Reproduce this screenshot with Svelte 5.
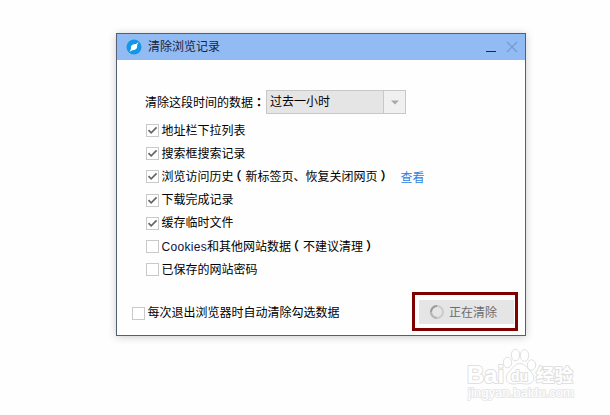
<script lang="ts">
    let items = [
        { label: "地址栏下拉列表", checked: true },
        { label: "搜索框搜索记录", checked: true },
        { label: "浏览访问历史", note: "新标签页、恢复关闭网页", link: "查看", checked: true },
        { label: "下载完成记录", checked: true },
        { label: "缓存临时文件", checked: true },
        { prefix: "Cookies", label: "和其他网站数据", note: "不建议清理", checked: false },
        { label: "已保存的网站密码", checked: false },
    ];
    let autoClear = false;
</script>

{#snippet box(checked: boolean)}
    <span class="box">
        {#if checked}
            <svg width="11" height="11" viewBox="0 0 11 11">
                <path d="M1.5 5.2L4.2 7.8L9.6 2.4" fill="none" stroke="#666" stroke-width="1.7" />
            </svg>
        {/if}
    </span>
{/snippet}

<div class="page">
    <div class="dialog">
        <div class="titlebar">
            <svg class="logo" width="16" height="16" viewBox="0 0 16 16">
                <circle cx="8" cy="8" r="7.5" fill="#1296e6" />
                <path d="M12.8 3.2L11.2 5.6L11 9Q9 11.4 6.4 11.2L3.4 12.8L4.9 10.2L5 7Q7 4.7 9.8 4.9Z" fill="#fff" />
            </svg>
            <span class="title">清除浏览记录</span>
            <svg class="controls" width="32" height="12" viewBox="0 0 32 12">
                <path d="M0 10.5H10" stroke="#20293b" stroke-width="1" />
                <path d="M21 1L31 11M31 1L21 11" stroke="#7099cf" stroke-width="1.1" />
            </svg>
        </div>

        <div class="body">
            <div class="range">
                <span class="caption">清除这段时间的数据<span class="colon">：</span></span>
                <div class="select">
                    <span class="value">过去一小时</span>
                    <span class="arrow">
                        <svg width="8" height="5" viewBox="0 0 8 5"><path d="M0 .5H8L4 4.5Z" fill="#aaa" /></svg>
                    </span>
                </div>
            </div>
            <div class="list">
                {#each items as item}
                    <div class="row">
                        {@render box(item.checked)}
                        <span class="label">
                            {#if item.prefix}<span class="latin">{item.prefix}</span>{/if}{item.label}{#if item.note}<span class="paren open">（</span>{item.note}<span class="paren">）</span>{/if}
                        </span>
                        {#if item.link}<span class="link">{item.link}</span>{/if}
                    </div>
                {/each}
            </div>
        </div>

        <div class="footer">
            <div class="auto">
                {@render box(autoClear)}
                <span class="label">每次退出浏览器时自动清除勾选数据</span>
            </div>
            <div class="highlight">
                <div class="button">
                    <svg width="16" height="16" viewBox="0 0 16 16" fill="none" stroke-width="2">
                        <circle cx="8" cy="8" r="6" stroke="#cbcbcb" />
                        <path d="M8 14A6 6 0 0 1 2 8" stroke="#b5b5b5" />
                        <path d="M2 8A6 6 0 0 1 8 2" stroke="#9b9b9b" />
                    </svg>
                    <span>正在清除</span>
                </div>
            </div>
        </div>
    </div>

    <svg class="watermark" width="120" height="60" viewBox="0 0 120 60">
        <g fill="#fff" stroke="#e0e0e0" stroke-width="1">
            <ellipse cx="40.5" cy="16.5" rx="4.2" ry="5.3" />
            <ellipse cx="48.5" cy="9" rx="4.2" ry="5.8" />
            <ellipse cx="57.5" cy="9.5" rx="4.2" ry="5.8" />
            <ellipse cx="64.5" cy="19" rx="4.2" ry="5.2" />
            <path d="M53 17.5C58 17.5 60 22 64 26C69 31 67 37.5 61 38C57 38 56 37.5 53 37.5C50 37.5 49 38 45 38C39 37.5 37 31 42 26C46 22 48 17.5 53 17.5Z" />
        </g>
        <g class="mark">
            <text class="bai" x="0" y="37" textLength="37" lengthAdjust="spacingAndGlyphs">Bai</text>
            <text class="du" x="44" y="35" textLength="17" lengthAdjust="spacingAndGlyphs">du</text>
            <text class="exp" x="69" y="36">经验</text>
            <text class="url" x="1" y="51" textLength="106" lengthAdjust="spacingAndGlyphs">jingyan.baidu.com</text>
        </g>
    </svg>
</div>

<style>
    :global(body) {
        overflow: hidden;
        background: #fefefe;
    }

    .page {
        position: relative;
        box-sizing: border-box;
        width: 610px;
        height: 415px;
        padding: 33px 0 0 116px;
        font: 12px/16px "Liberation Sans", "Noto Sans CJK SC", sans-serif;
        color: #000;
    }

    .dialog {
        display: flex;
        flex-direction: column;
        box-sizing: border-box;
        width: 410px;
        height: 303px;
        border: 1px solid #535f75;
        background: #fefefe;
        box-shadow: 0 1px 8px rgba(0, 0, 0, 0.2);
        white-space: nowrap;
    }

    .titlebar {
        display: flex;
        align-items: center;
        box-sizing: border-box;
        height: 26px;
        padding: 0 7px 0 9px;
        background: #92bbf3;
    }

    .title {
        margin-left: 6px;
        color: #17233a;
    }

    .controls {
        margin-left: auto;
    }

    .body {
        flex: 1;
        padding: 30px 0 0 28px;
    }

    .range {
        display: flex;
        align-items: center;
    }

    .caption {
        width: 121px;
    }

    .colon {
        font-family: "Noto Sans CJK TC", sans-serif;
        font-weight: bold;
    }

    .select {
        display: flex;
        box-sizing: border-box;
        width: 140px;
        height: 24px;
        border: 1px solid #c8c8c8;
        background: #e5e5e5;
        line-height: 22px;
    }

    .value {
        flex: 1;
        padding-left: 3px;
    }

    .arrow {
        display: flex;
        align-items: center;
        justify-content: center;
        width: 21px;
        border-left: 1px solid #c8c8c8;
        background: #f0f0f0;
    }

    .list {
        padding: 5px 0 0 1px;
    }

    .row {
        display: flex;
        align-items: center;
        height: 23.2px;
    }

    .box {
        display: flex;
        box-sizing: border-box;
        width: 13px;
        height: 13px;
        margin-right: 2.5px;
        border: 1px solid #c9c9c9;
        background: #fff;
    }

    .latin {
        color: #101040;
        letter-spacing: 0.3px;
    }

    /* half-width brackets centred in a full-width cell */
    .paren {
        display: inline-block;
        width: 6px;
        margin: 0 3px;
        font-family: "Noto Sans CJK SC", sans-serif;
        font-weight: bold;
        font-feature-settings: "halt";
        line-height: 16px;
    }

    .open {
        margin: 0 4px 0 2px;
    }

    .link {
        margin-left: 11px;
        padding-top: 3px;
        color: #2f7fe0;
    }

    .footer {
        display: flex;
        align-items: center;
        justify-content: space-between;
        padding: 0 7px 4px 15px;
    }

    .auto {
        display: flex;
        align-items: center;
        padding-top: 3px;
    }

    .highlight {
        box-sizing: border-box;
        width: 106px;
        height: 39px;
        padding: 5px 1px 4px 4px;
        border: 3px solid #800000;
    }

    .button {
        display: flex;
        align-items: center;
        box-sizing: border-box;
        height: 24px;
        padding-left: 10px;
        background: #e5e5e5;
        color: #6c6c6c;
    }

    .button span {
        margin-left: 4px;
        padding-top: 2px;
    }

    .watermark {
        position: absolute;
        left: 467px;
        top: 346px;
    }

    .mark {
        fill: #fff;
        stroke: #e0e0e0;
        stroke-width: 2px;
        stroke-linejoin: round;
        paint-order: stroke;
        font-weight: bold;
    }

    .bai {
        font-size: 24px;
    }

    .du {
        font-size: 14px;
    }

    .exp {
        font-size: 18.5px;
    }

    .url {
        font-size: 12px;
        font-weight: normal;
        stroke: #e8e8e8;
    }
</style>
